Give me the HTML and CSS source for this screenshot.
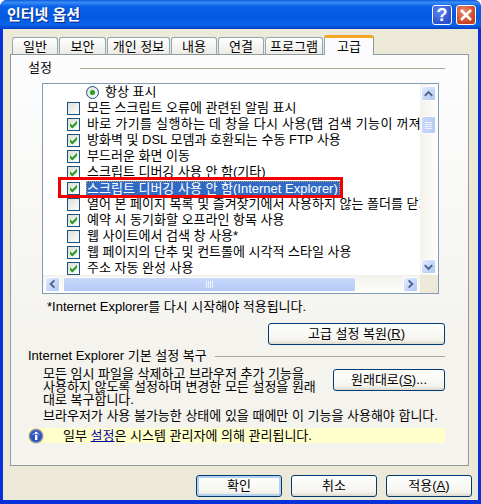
FILE: index.html
```html
<!DOCTYPE html>
<html lang="ko">
<head>
    <meta charset="UTF-8">
    <title>인터넷 옵션</title>
    <link rel="stylesheet" href="styles.css">
</head>
<body>

<svg class="defs" width="0" height="0">
    <symbol id="check" viewBox="0 0 11 11">
        <path d="M2 4.2l2.3 2.3L9 1.8v3L4.3 9.6 2 7.2z" fill="#1f9f1f"/>
    </symbol>
    <symbol id="up" viewBox="0 0 14 14">
        <path d="M3 9l4-4 4 4" fill="none" stroke="#4d6185" stroke-width="2"/>
    </symbol>
</svg>

<div class="window">
    <div class="titlebar">
        <span class="title">인터넷 옵션</span>
        <div class="title-btns">
            <span class="cap help">?</span>
            <span class="cap close">
                <svg width="14" height="14" viewBox="0 0 14 14"><path d="M2 2l10 10M12 2L2 12" stroke="#fff" stroke-width="2.6"/></svg>
            </span>
        </div>
    </div>

    <div class="body">
        <!--탭-->
        <ul class="tabs">
            <li style="width:46px">일반</li>
            <li style="width:47px">보안</li>
            <li style="width:63px">개인 정보</li>
            <li style="width:46px">내용</li>
            <li style="width:46px">연결</li>
            <li style="width:58px">프로그램</li>
            <li class="current" style="width:50px">고급</li>
        </ul>

        <div class="panel">
            <div class="legend legend-first"><span>설정</span><i></i></div>

            <div class="list">
                <div class="rows">
                    <div class="row radio-row"><span class="radio"><b></b></span>항상 표시</div>
                    <div class="row"><span class="chk"></span>모든 스크립트 오류에 관련된 알림 표시</div>
                    <div class="row row-wide"><span class="chk"><svg><use href="#check"/></svg></span>바로 가기를 실행하는 데 창을 다시 사용(탭 검색 기능이 꺼져</div>
                    <div class="row"><span class="chk"><svg><use href="#check"/></svg></span>방화벽 및 DSL 모뎀과 호환되는 수동 FTP 사용</div>
                    <div class="row"><span class="chk"><svg><use href="#check"/></svg></span>부드러운 화면 이동</div>
                    <div class="row"><span class="chk"><svg><use href="#check"/></svg></span>스크립트 디버깅 사용 안 함(기타)</div>
                    <div class="row row-sel"><span class="chk"><svg><use href="#check"/></svg></span><span class="sel">스크립트 디버깅 사용 안 함(Internet Explorer)</span><span class="mark"></span></div>
                    <div class="row"><span class="chk"></span>열어 본 페이지 목록 및 즐겨찾기에서 사용하지 않는 폴더를 닫기</div>
                    <div class="row"><span class="chk"><svg><use href="#check"/></svg></span>예약 시 동기화할 오프라인 항목 사용</div>
                    <div class="row"><span class="chk"></span>웹 사이트에서 검색 창 사용*</div>
                    <div class="row"><span class="chk"><svg><use href="#check"/></svg></span>웹 페이지의 단추 및 컨트롤에 시각적 스타일 사용</div>
                    <div class="row"><span class="chk"><svg><use href="#check"/></svg></span>주소 자동 완성 사용</div>
                </div>

                <div class="vbar">
                    <span class="sbtn"><svg width="14" height="14"><use href="#up"/></svg></span>
                    <span class="vthumb"><i></i><i></i><i></i><i></i></span>
                    <span class="sbtn"><svg class="flip" width="14" height="14"><use href="#up"/></svg></span>
                </div>
                <div class="hbar">
                    <span class="sbtn"><svg class="left" width="14" height="14"><use href="#up"/></svg></span>
                    <span class="hthumb"><i></i><i></i><i></i><i></i></span>
                    <span class="sbtn"><svg class="right" width="14" height="14"><use href="#up"/></svg></span>
                </div>
                <div class="corner"></div>
            </div>

            <p class="note">*Internet Explorer를 다시 시작해야 적용됩니다.</p>
            <div class="restore-line"><button class="btn btn-restore">고급 설정 복원(<u>R</u>)</button></div>

            <div class="legend legend-second"><span>Internet Explorer 기본 설정 복구</span><i></i></div>

            <div class="reset">
                <div class="reset-text">
                    <span>모든 임시 파일을 삭제하고 브라우저 추가 기능을</span>
                    <span>사용하지 않도록 설정하며 변경한 모든 설정을 원래</span>
                    <span>대로 복구합니다.</span>
                </div>
                <button class="btn btn-reset">원래대로(<u>S</u>)...</button>
            </div>
            <p class="warn">브라우저가 사용 불가능한 상태에 있을 때에만 이 기능을 사용해야 합니다.</p>

            <div class="info">
                <svg class="info-icon" width="16" height="16" viewBox="0 0 16 16">
                    <circle cx="8" cy="8" r="7.5" fill="#9a9a98"/>
                    <circle cx="8" cy="8" r="6" fill="#2b50c4"/>
                    <path d="M3.5 7a5 4.5 0 0 1 9 0 8 4 0 0 0-9 0z" fill="#8fa8ea"/>
                    <rect x="7" y="7" width="2.4" height="5" fill="#fff"/>
                    <rect x="7" y="3.8" width="2.4" height="2" fill="#fff"/>
                </svg>
                <span>일부 <a href="#">설정</a>은 시스템 관리자에 의해 관리됩니다.</span>
            </div>
        </div>

        <div class="actions">
            <button class="btn btn-main btn-default">확인</button>
            <button class="btn btn-main">취소</button>
            <button class="btn btn-main">적용(<u>A</u>)</button>
        </div>
    </div>
</div>

</body>
</html>
```

FILE: styles.css
```css
* {
    margin: 0;
    padding: 0;
    box-sizing: border-box;
}

ul {
    list-style: none
}

body {
    width: 481px;
    height: 504px;
    overflow: hidden;
    background-color: #fff;
    font: 13px/16px "Liberation Sans", "Noto Sans CJK KR", sans-serif;
    color: #000;
}

.defs {
    position: absolute;
}

.window {
    width: 481px;
    height: 504px;
    display: flex;
    flex-direction: column;
    background-color: #0831d9;
    border-radius: 7px 7px 0 0;
    overflow: hidden;
}

.titlebar {
    height: 29px;
    flex: none;
    display: flex;
    align-items: center;
    justify-content: space-between;
    padding: 0 5px 0 7px;
    background: linear-gradient(#0a5ae0 0, #3b8cf6 8%, #0a62e8 22%, #0458e0 60%, #0a64ee 85%, #0340c8 100%);
}

.title {
    color: #fff;
    font-size: 15px;
    font-weight: bold;
    text-shadow: 1px 1px 0 #0a2a90;
}

.title-btns {
    display: flex;
    gap: 4px;
}

.cap {
    width: 20px;
    height: 20px;
    display: flex;
    align-items: center;
    justify-content: center;
    border: 1px solid #fff;
    border-radius: 3px;
}

.help {
    background: radial-gradient(circle at 35% 30%, #5f86ee, #2a4fd0 75%);
    color: #fff;
    font: bold 18px/18px "Liberation Sans", sans-serif;
}

.close {
    background: radial-gradient(circle at 35% 30%, #ec8a68, #c83f1c 75%);
}

.body {
    flex: 1;
    margin: 0 3px 4px 3px;
    padding: 6px 6px 3px 7px;
    background-color: #ece9d8;
    display: flex;
    flex-direction: column;
}

.tabs {
    display: flex;
    height: 19px;
    align-items: flex-end;
    padding-left: 2px;
    gap: 1px;
    flex: none;
    position: relative;
    z-index: 1;
}

.tabs li {
    height: 17px;
    line-height: 18px;
    text-align: center;
    background: linear-gradient(#fff, #ecebe5);
    border: 1px solid #91a7b4;
    border-bottom: 0;
    border-radius: 3px 3px 0 0;
}

.tabs li.current {
    height: 20px;
    margin-bottom: -1px;
    line-height: 17px;
    background: #fcfcfe;
    border-top: 3px solid #f5a623;
    border-right-color: #919b9c;
}

.panel {
    width: 459px;
    height: 412px;
    flex: none;
    padding: 0 23px 0 17px;
    background: linear-gradient(#fdfdfe, #f4f3ee 70%);
    border: 1px solid #919b9c;
}

.legend {
    display: flex;
    align-items: center;
    gap: 8px;
}

.legend i {
    flex: 1;
    height: 1px;
    background-color: #aca899;
}

.legend-first {
    height: 16px;
    margin-top: 5px;
    margin-bottom: 7px;
}

.legend-first i {
    margin-left: 20px;
}

.list {
    width: 397px;
    height: 211px;
    margin-left: 14px;
    display: grid;
    grid-template-columns: 1fr 18px;
    grid-template-rows: 1fr 18px;
    border: 1px solid #7f9db9;
    background-color: #fff;
}

.rows {
    overflow: hidden;
    min-width: 0;
}

.row {
    height: 16px;
    display: flex;
    align-items: center;
    padding-left: 24px;
    white-space: nowrap;
    position: relative;
}

.row-wide {
    letter-spacing: 0.3px;
}

.radio-row {
    padding-left: 43px;
}

.chk {
    width: 13px;
    height: 13px;
    flex: none;
    margin-right: 7px;
    border: 1px solid #1c5180;
    background: linear-gradient(135deg, #dcdcd7, #fff);
    display: flex;
}

.chk svg {
    width: 11px;
    height: 11px;
}

.radio {
    width: 13px;
    height: 13px;
    flex: none;
    margin-right: 6px;
    border: 1px solid #1c5180;
    border-radius: 50%;
    background: linear-gradient(135deg, #dcdcd7, #fff);
    display: flex;
    align-items: center;
    justify-content: center;
}

.radio b {
    width: 5px;
    height: 5px;
    border-radius: 50%;
    background-color: #21a121;
}

.sel {
    margin-left: -1px;
    padding: 0 2px 0 1px;
    height: 15px;
    line-height: 15px;
    color: #fff;
    background-color: #316ac5;
    outline: 1px dotted #c8b060;
    outline-offset: -1px;
}

/* 빨간 표시는 행 위에 겹쳐 그림 */
.mark {
    position: absolute;
    left: 15px;
    top: -3px;
    width: 285px;
    height: 21px;
    border: 3px solid #f00000;
    z-index: 2;
}

.vbar {
    grid-row: 1;
    grid-column: 2;
    display: flex;
    flex-direction: column;
    align-items: center;
    padding: 2px 2px 1px 0;
    background: linear-gradient(90deg, #f3f1ec, #fefefb);
    position: relative;
}

.sbtn {
    width: 15px;
    height: 15px;
    flex: none;
    display: flex;
    align-items: center;
    justify-content: center;
    border: 1px solid #fff;
    border-radius: 2px;
    background: linear-gradient(135deg, #e1eafe, #aec8f7);
}

.flip {
    transform: rotate(180deg);
}

.left {
    transform: rotate(-90deg);
}

.right {
    transform: rotate(90deg);
}

.vthumb {
    width: 15px;
    height: 18px;
    margin: 15px 0 auto;
    display: flex;
    flex-direction: column;
    align-items: center;
    justify-content: center;
    gap: 1px;
    border: 1px solid #fff;
    border-radius: 2px;
    background: linear-gradient(90deg, #c9d8fb, #b4cbf8);
}

.vthumb i {
    width: 7px;
    height: 1px;
    background-color: #eef4fe;
}

.hbar {
    grid-row: 2;
    grid-column: 1;
    display: flex;
    align-items: center;
    padding: 0 2px;
    background: linear-gradient(#f3f1ec, #fefefb);
}

.hthumb {
    width: 293px;
    height: 15px;
    margin: 0 auto 0 3px;
    display: flex;
    align-items: center;
    justify-content: center;
    gap: 1px;
    border: 1px solid #fff;
    border-radius: 2px;
    background: linear-gradient(#c9d8fb, #b4cbf8);
}

.hthumb i {
    width: 1px;
    height: 7px;
    background-color: #eef4fe;
}

.corner {
    background-color: #ece9d8;
}

.note {
    margin: 5px 0 0 19px;
    white-space: nowrap;
}

.restore-line {
    display: flex;
    justify-content: flex-end;
    margin-top: 8px;
}

.btn {
    font: inherit;
    color: #000;
    border: 1px solid #003c74;
    border-radius: 3px;
    background: linear-gradient(#fff, #f5f4ee 80%, #dcd8cc);
}

.btn-restore {
    width: 177px;
    height: 22px;
}

.legend-second {
    height: 16px;
    margin-top: 3px;
}

.reset {
    display: flex;
    align-items: flex-start;
    justify-content: space-between;
    margin-top: 3px;
    padding-left: 15px;
}

.reset-text {
    white-space: nowrap;
}

.reset-text span {
    display: block;
    height: 13px;
    line-height: 13px;
}

.btn-reset {
    width: 112px;
    height: 22px;
    margin-top: 2px;
}

.warn {
    margin: 2px 0 0 15px;
    white-space: nowrap;
}

.info {
    display: flex;
    align-items: center;
    gap: 19px;
    height: 15px;
    margin-top: 4px;
    background-color: #ffffcc;
}

.info-icon {
    flex: none;
}

.info a {
    color: #0000aa;
}

.actions {
    display: flex;
    justify-content: flex-end;
    gap: 9px;
    margin-top: 9px;
}

.btn-main {
    width: 86px;
    height: 22px;
}

.btn-default {
    box-shadow: inset 0 0 0 2px #b6d0f2;
}
```
